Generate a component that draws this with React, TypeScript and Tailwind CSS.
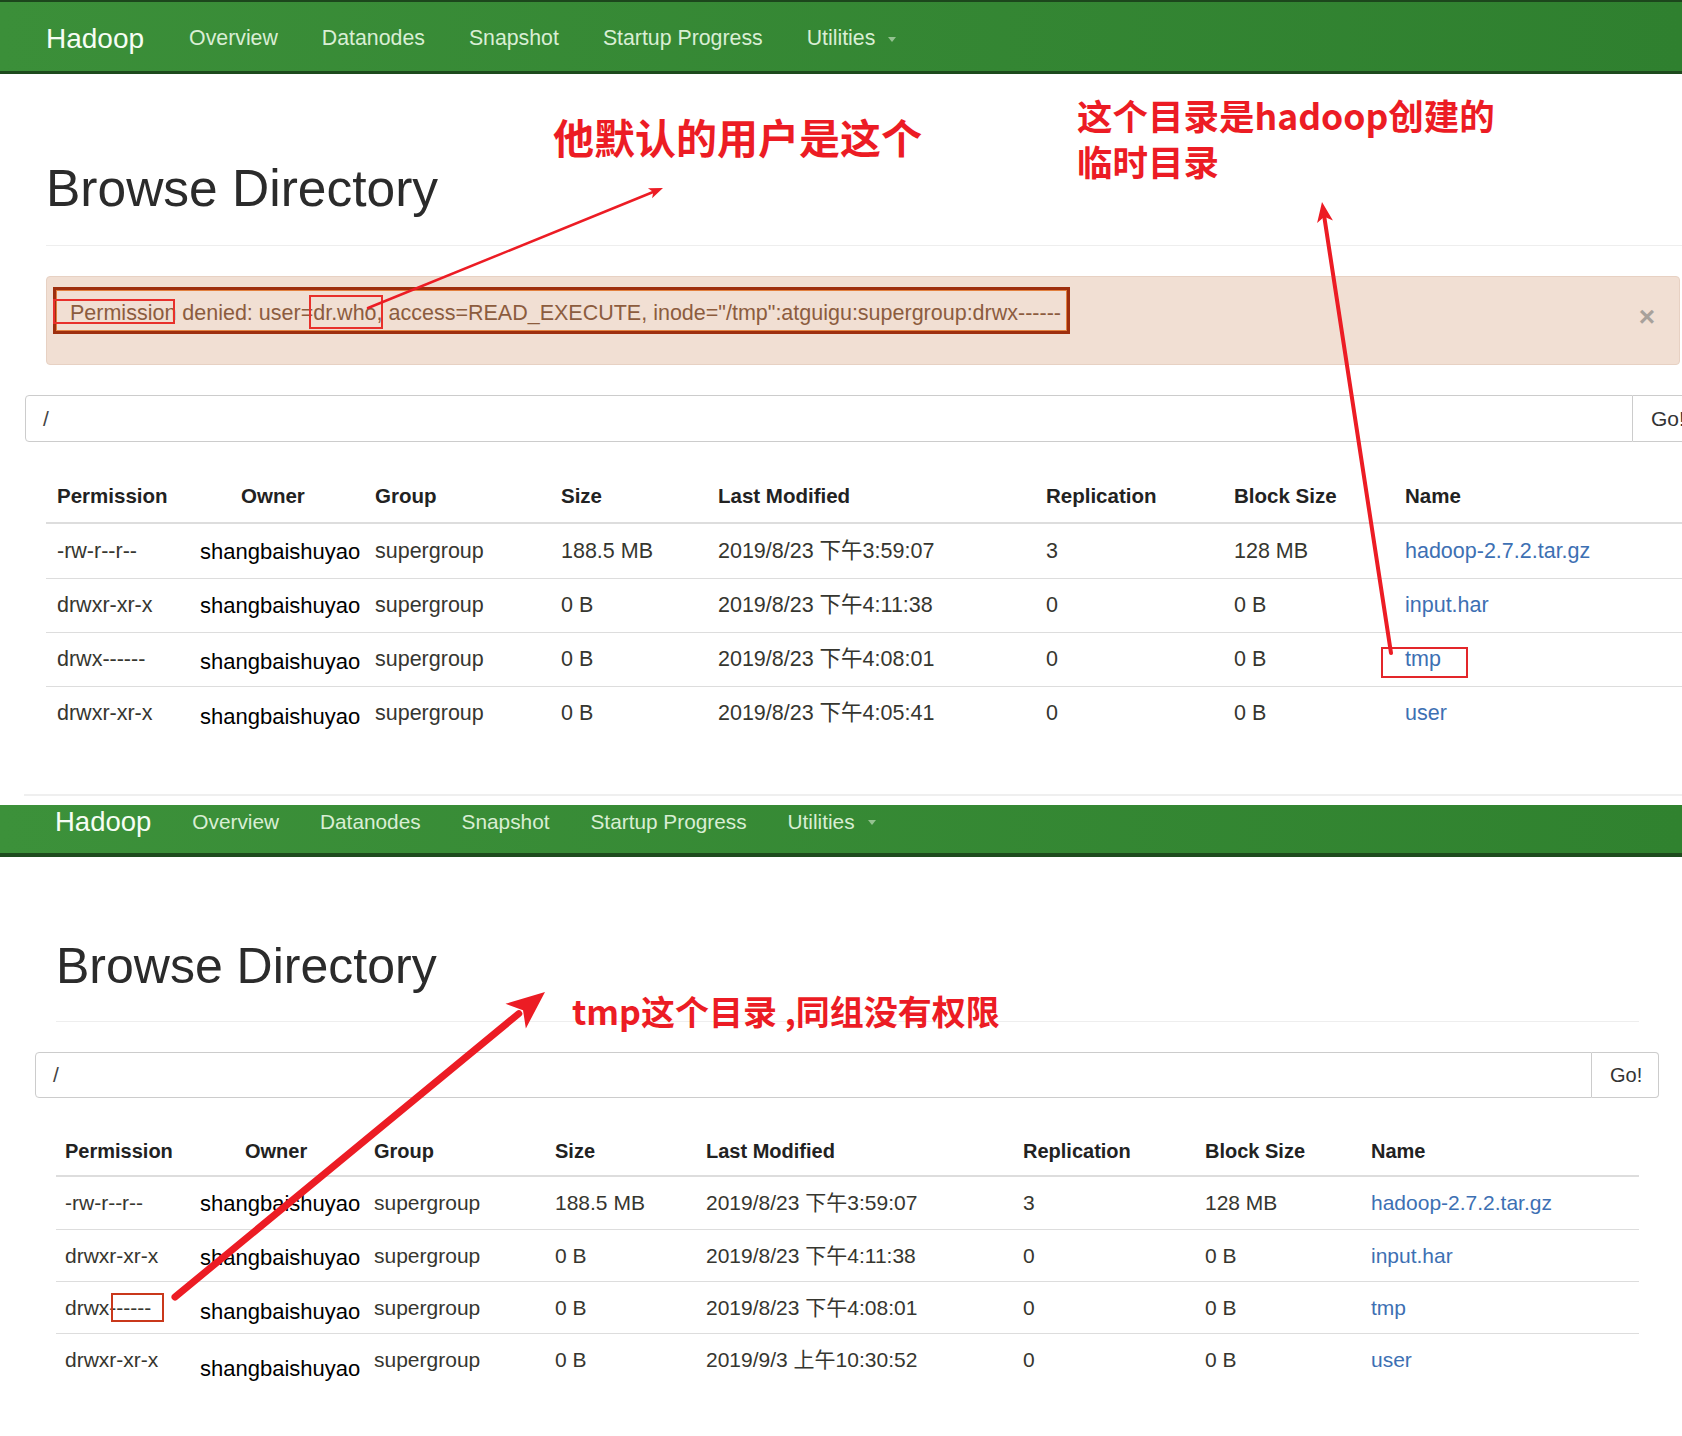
import React from 'react';

type Row = {
  perm: string;
  group: string;
  size: string;
  date: string;
  rep: string;
  block: string;
  name: string;
  shift: string;
};

const topRows: Row[] = [
  { perm: '-rw-r--r--', group: 'supergroup', size: '188.5 MB', date: '2019/8/23 下午3:59:07', rep: '3', block: '128 MB', name: 'hadoop-2.7.2.tar.gz', shift: '' },
  { perm: 'drwxr-xr-x', group: 'supergroup', size: '0 B', date: '2019/8/23 下午4:11:38', rep: '0', block: '0 B', name: 'input.har', shift: '' },
  { perm: 'drwx------', group: 'supergroup', size: '0 B', date: '2019/8/23 下午4:08:01', rep: '0', block: '0 B', name: 'tmp', shift: 'translate-y-[2px]' },
  { perm: 'drwxr-xr-x', group: 'supergroup', size: '0 B', date: '2019/8/23 下午4:05:41', rep: '0', block: '0 B', name: 'user', shift: 'translate-y-[3px]' },
];

const bottomRows: Row[] = [
  { perm: '-rw-r--r--', group: 'supergroup', size: '188.5 MB', date: '2019/8/23 下午3:59:07', rep: '3', block: '128 MB', name: 'hadoop-2.7.2.tar.gz', shift: '' },
  { perm: 'drwxr-xr-x', group: 'supergroup', size: '0 B', date: '2019/8/23 下午4:11:38', rep: '0', block: '0 B', name: 'input.har', shift: 'translate-y-[2px]' },
  { perm: 'drwx------', group: 'supergroup', size: '0 B', date: '2019/8/23 下午4:08:01', rep: '0', block: '0 B', name: 'tmp', shift: 'translate-y-[4px]' },
  { perm: 'drwxr-xr-x', group: 'supergroup', size: '0 B', date: '2019/9/3 上午10:30:52', rep: '0', block: '0 B', name: 'user', shift: 'translate-y-[9px]' },
];

const navItems = ['Overview', 'Datanodes', 'Snapshot', 'Startup Progress'];

function NavBar({ top }: { top: boolean }) {
  return (
    <div
      className={
        top
          ? 'h-[74px] border-t-2 border-b-[3px] border-t-[#1c461c] border-b-[#1d4a1d] bg-linear-to-r from-[#3b8f39] to-[#2f802f] flex items-center pl-[46px] pt-[4px] gap-[44px] text-[21.3px] text-[#d9eed4]'
          : 'h-[52px] border-b-4 border-b-[#1e4b1e] bg-linear-to-r from-[#3c913a] to-[#30822f] flex items-center pl-[55px] pb-[15px] gap-[41px] text-[20.8px] text-[#d9eed4]'
      }
    >
      <span className={top ? 'text-[28px] text-[#f6fdf4] mr-[1px]' : 'text-[27.5px] text-[#f6fdf4]'}>Hadoop</span>
      {navItems.map((item) => (
        <span key={item}>{item}</span>
      ))}
      <span className="flex items-center">
        Utilities
        <span className="ml-[13px] mt-[2px] w-0 h-0 border-x-[4px] border-x-transparent border-t-[5px] border-t-[#94c291]" />
      </span>
    </div>
  );
}

function SearchBar({ top }: { top: boolean }) {
  return (
    <div className={top ? 'flex mt-[30px] -ml-[21px] w-[1678px] h-[47px]' : 'flex mt-[30px] -ml-[21px] w-[1624px] h-[46px]'}>
      <div className="flex-1 border border-[#cccccc] rounded-l-[4px] flex items-center pl-[17px] text-[21px] text-[#444444]">/</div>
      <div
        className={
          top
            ? 'w-[70px] border border-l-0 border-[#cccccc] bg-white flex items-center pl-[18px] text-[21px] text-[#333333]'
            : 'w-[67px] border border-l-0 border-[#cccccc] rounded-r-[4px] bg-white flex items-center pl-[18px] text-[20px] text-[#333333]'
        }
      >
        Go!
      </div>
    </div>
  );
}

function FileTable({ top }: { top: boolean }) {
  const cols = top
    ? 'grid grid-cols-[184px_134px_186px_157px_328px_188px_171px_292px]'
    : 'grid grid-cols-[180px_129px_181px_151px_317px_182px_166px_277px]';
  const cell = top ? 'pl-[11px] flex items-center' : 'pl-[9px] flex items-center';
  const rows = top ? topRows : bottomRows;
  const headers = ['Permission', 'Owner', 'Group', 'Size', 'Last Modified', 'Replication', 'Block Size', 'Name'];
  return (
    <div className={top ? 'mt-[28px] w-[1640px]' : 'mt-[28px] w-[1583px]'}>
      <div
        className={
          cols +
          (top
            ? ' h-[54px] border-b-2 border-[#dddddd] text-[20.5px] font-bold text-[#222222]'
            : ' h-[51px] border-b-2 border-[#dddddd] text-[20px] font-bold text-[#222222]')
        }
      >
        {headers.map((h) => (
          <div key={h} className={cell}>
            {h}
          </div>
        ))}
      </div>
      {rows.map((r, i) => (
        <div
          key={i}
          className={
            cols +
            (top ? ' h-[54px] text-[21.5px]' : ' h-[52px] text-[21px]') +
            ' text-[#36362f]' +
            (i > 0 ? ' border-t border-[#dddddd]' : '')
          }
        >
          <div className={cell}>{r.perm}</div>
          <div className={cell}>
            <span className={(top ? '-ml-[41px] ' : '-ml-[45px] ') + 'text-[22px] text-black whitespace-nowrap ' + r.shift}>
              shangbaishuyao
            </span>
          </div>
          <div className={cell}>{r.group}</div>
          <div className={cell}>{r.size}</div>
          <div className={cell + ' whitespace-nowrap'}>{r.date}</div>
          <div className={cell}>{r.rep}</div>
          <div className={cell}>{r.block}</div>
          <div className={cell + ' text-[#3d70b3]'}>{r.name}</div>
        </div>
      ))}
    </div>
  );
}

function Arrow({ x1, y1, x2, y2, w, hl, hw }: { x1: number; y1: number; x2: number; y2: number; w: number; hl: number; hw: number }) {
  const dx = x2 - x1;
  const dy = y2 - y1;
  const len = Math.hypot(dx, dy);
  const ux = dx / len;
  const uy = dy / len;
  const bx = x2 - ux * hl;
  const by = y2 - uy * hl;
  const nx = -uy;
  const ny = ux;
  const pts = `${x2},${y2} ${bx + (nx * hw) / 2},${by + (ny * hw) / 2} ${bx + ux * hl * 0.25},${by + uy * hl * 0.25} ${bx - (nx * hw) / 2},${by - (ny * hw) / 2}`;
  return (
    <g>
      <line x1={x1} y1={y1} x2={bx + ux * 4} y2={by + uy * 4} stroke="#ec1c24" strokeWidth={w} strokeLinecap="round" />
      <polygon points={pts} fill="#ec1c24" />
    </g>
  );
}

export default function App() {
  return (
    <div className="relative w-[1682px] h-[1436px] overflow-hidden bg-white font-['Liberation_Sans','Noto_Sans_CJK_SC',sans-serif]">
      {/* first screenshot */}
      <section className="h-[794px]">
        <NavBar top />
        <div className="pl-[46px]">
          <h1 className="mt-[87px] pb-[30px] border-b border-[#eeeeee] text-[51.5px] leading-[54px] font-normal text-[#2b2b2b]">
            Browse Directory
          </h1>
          <div className="mt-[30px] w-[1634px] h-[89px] rounded-[4px] border border-[#e7d1c3] bg-[#f1dfd3] flex items-start pl-[23px] pt-[24px] pr-[24px]">
            <span className="text-[21.5px] leading-[24px] text-[#8c5c3e] whitespace-nowrap">
              Permission denied: user=dr.who, access=READ_EXECUTE, inode="/tmp":atguigu:supergroup:drwx------
            </span>
            <span className="ml-auto mt-[4px] text-[28px] leading-[24px] font-bold text-[#a8a19b]">×</span>
          </div>
          <SearchBar top />
          <FileTable top />
        </div>
      </section>

      {/* second screenshot */}
      <section>
        <div className="ml-[24px] h-[2px] bg-[#efefef]" />
        <div className="mt-[9px]">
          <NavBar top={false} />
        </div>
        <div className="pl-[56px]">
          <h1 className="mt-[84px] w-[1583px] pb-[30px] border-b border-[#eeeeee] text-[50px] leading-[50px] font-normal text-[#2b2b2b]">
            Browse Directory
          </h1>
          <SearchBar top={false} />
          <FileTable top={false} />
        </div>
      </section>

      {/* annotations */}
      <div className="absolute left-[53px] top-[287px] w-[1017px] h-[47px] border-[3px] border-[#9e2f0e] shadow-[inset_0_0_0_1px_#e2803f]" />
      <div className="absolute left-[53px] top-[299px] w-[122px] h-[25px] border-2 border-[#e8302b]" />
      <div className="absolute left-[309px] top-[295px] w-[74px] h-[34px] border-2 border-[#e8302b]" />
      <div className="absolute left-[1381px] top-[647px] w-[87px] h-[31px] border-2 border-[#e3262a]" />
      <div className="absolute left-[111px] top-[1293px] w-[53px] h-[29px] border-2 border-[#c9381b]" />

      <div className="absolute left-[553px] top-[116px] text-[41px] leading-none font-bold text-[#ec1c24] whitespace-nowrap font-['Noto_Sans_CJK_SC',sans-serif]">
        他默认的用户是这个
      </div>
      <div className="absolute left-[1077px] top-[92px] text-[35.5px] leading-[46px] font-bold text-[#ec1c24] whitespace-nowrap font-['Noto_Sans_CJK_SC',sans-serif]">
        <div>这个目录是hadoop创建的</div>
        <div>临时目录</div>
      </div>
      <div className="absolute left-[572px] top-[994px] text-[34px] leading-none font-bold text-[#ec1c24] whitespace-nowrap font-['Noto_Sans_CJK_SC',sans-serif]">
        tmp这个目录 ,同组没有权限
      </div>

      <svg className="absolute inset-0 pointer-events-none" width="1682" height="1436" viewBox="0 0 1682 1436">
        <Arrow x1={368} y1={308} x2={663} y2={188} w={2.5} hl={14} hw={11} />
        <Arrow x1={1391} y1={653} x2={1322} y2={202} w={4} hl={20} hw={16} />
        <Arrow x1={175} y1={1297} x2={545} y2={992} w={7} hl={38} hw={32} />
      </svg>
    </div>
  );
}
